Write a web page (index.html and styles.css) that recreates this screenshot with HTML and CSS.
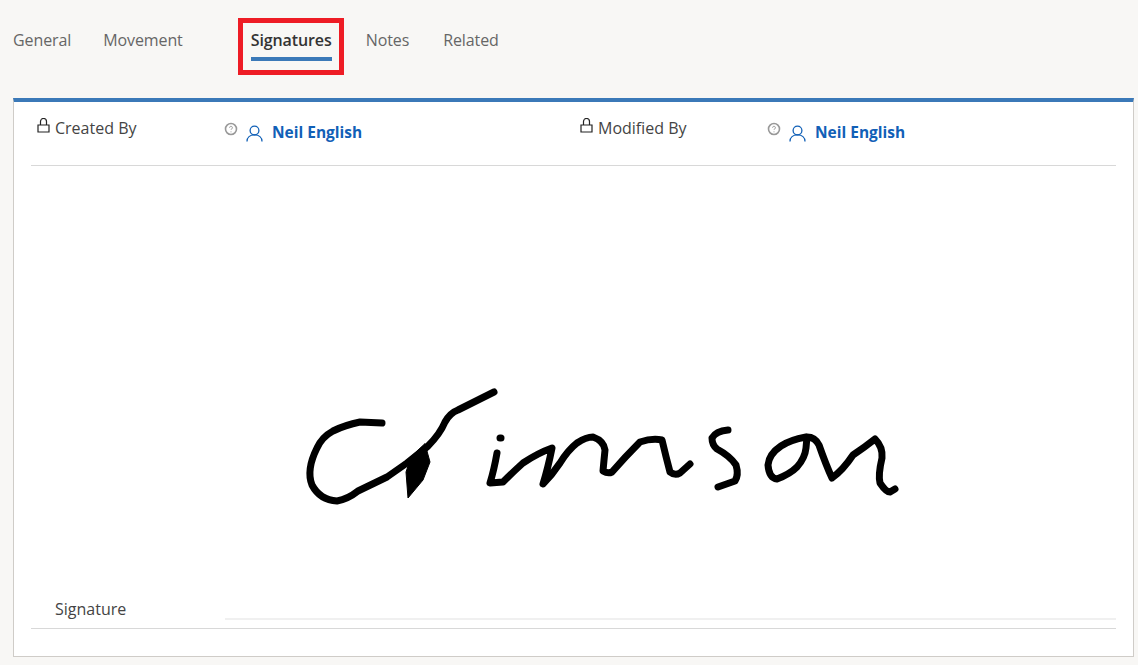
FILE: index.html
```html
<!DOCTYPE html>
<html lang="en">
<head>
    <meta charset="UTF-8">
    <title>Signatures</title>
    <link rel="stylesheet" href="styles.css">
</head>
<body>
    <nav class="tabs">
        <a class="tab tab-general">General</a>
        <a class="tab tab-movement">Movement</a>
        <a class="tab tab-active">Signatures</a>
        <a class="tab tab-notes">Notes</a>
        <a class="tab">Related</a>
    </nav>

    <section class="panel">
        <div class="meta-row">
            <div class="meta-field">
                <div class="meta-label">
                    <svg class="lock" viewBox="0 0 13 15"><path d="M1 7h11v7H1zM3.5 7V3.5a3 3 0 0 1 6 0V7"/></svg>
                    <span>Created By</span>
                </div>
                <div class="meta-value">
                    <svg class="help" viewBox="0 0 14 14"><circle cx="7" cy="7" r="5.5"/><path d="M5.6 5.7a1.4 1.4 0 1 1 2.1 1.2c-.5.3-.7.5-.7 1M7 9.4v.9"/></svg>
                    <svg class="person" viewBox="0 0 17 17"><circle cx="8.5" cy="5.5" r="4.4"/><path d="M1 16.5c0-4 3-6.6 7.5-6.6s7.5 2.6 7.5 6.6"/></svg>
                    <a class="person-link">Neil English</a>
                </div>
            </div>
            <div class="meta-field">
                <div class="meta-label">
                    <svg class="lock" viewBox="0 0 13 15"><path d="M1 7h11v7H1zM3.5 7V3.5a3 3 0 0 1 6 0V7"/></svg>
                    <span>Modified By</span>
                </div>
                <div class="meta-value">
                    <svg class="help" viewBox="0 0 14 14"><circle cx="7" cy="7" r="5.5"/><path d="M5.6 5.7a1.4 1.4 0 1 1 2.1 1.2c-.5.3-.7.5-.7 1M7 9.4v.9"/></svg>
                    <svg class="person" viewBox="0 0 17 17"><circle cx="8.5" cy="5.5" r="4.4"/><path d="M1 16.5c0-4 3-6.6 7.5-6.6s7.5 2.6 7.5 6.6"/></svg>
                    <a class="person-link">Neil English</a>
                </div>
            </div>
        </div>

        <div class="signature-row">
            <div class="signature-label">Signature</div>
            <div class="signature-box">
                <!-- handwritten signature image, viewBox uses page coordinates -->
                <svg class="signature" viewBox="225 380 680 130" role="img" aria-label="Handwritten signature">
                    <path d="M382 423 L360 422 Q345 425 333 431 Q322 437 317 448 Q306 470 312 485 Q320 500 337 501 Q348 499 358 491 L387 477 L407 463 Q420 453 428 446 Q440 434 445 422 Q450 413 458 410 L494 392"/>
                    <path class="fill" d="M425 444 L430 462 L423 480 L408 498 L406 472 L411 457 Z"/>
                    <path d="M497 453 Q494 470 490 483 L503 482 Q513 472 523 463 Q538 453 552 448 Q548 468 543 484 Q552 475 560 463 Q568 450 577 443 Q586 437 593 437 Q604 441 605 450 Q604 460 603 471 Q608 474 612 472 Q625 457 640 442 Q652 438 662 440 Q666 457 670 472 Q675 476 680 473 L690 464"/>
                    <path class="dot" d="M500 438 L501 438"/>
                    <path d="M728 430 Q716 431 712 438 Q712 445 717 449 Q730 456 736 465 Q739 475 735 481 L718 487"/>
                    <path d="M806 437 Q790 440 781 446 Q769 454 768 465 Q769 478 777 479 Q790 474 797 467 Q805 458 806 448 L807 437 Q815 437 819 445 Q826 465 832 478 Q843 470 853 455 Q865 447 875 439 Q883 447 882 458 Q878 475 880 483 Q886 492 890 492 L895 489"/>
                </svg>
            </div>
        </div>
    </section>
</body>
</html>
```

FILE: styles.css
```css
body {
    margin: 0;
    height: 665px;
    overflow: hidden;
    background: #f8f7f5;
    font-family: "Open Sans", "Noto Sans", sans-serif;
    font-size: 16px;
    color: #444;
    padding: 18px 4px 0 13px;
    box-sizing: border-box;
}

/* tab strip */
.tabs {
    display: flex;
    align-items: flex-start;
    height: 80px;
}

.tab {
    color: #666;
    line-height: 20px;
    margin-top: 12px;
    letter-spacing: -0.1px;
}

.tab-general {
    margin-right: 32px;
}

.tab-movement {
    margin-right: 55px;
}

.tab-notes {
    margin-right: 34px;
}

.tab-active {
    box-sizing: border-box;
    width: 106px;
    height: 57px;
    margin: 0 22px 0 0;
    padding: 7px 7px 0 8px;
    border: 5px solid #ee1c25;
    background: #f8f7f5;
    color: #333;
    font-size: 16px;
    font-weight: 600;
    text-align: left;
    white-space: nowrap;
}

.tab-active::after {
    content: "";
    display: block;
    height: 4px;
    margin-top: 7px;
    background: #3b79b8;
}

/* main panel */
.panel {
    box-sizing: border-box;
    height: 559px;
    padding: 0 17px 0 17px;
    background: #fff;
    border: 1px solid #cfccc8;
    border-top: 4px solid #3b79b8;
}

.meta-row {
    display: grid;
    grid-template-columns: 543px 1fr;
    height: 63px;
    border-bottom: 1px solid #d8d8d8;
}

.meta-field {
    display: flex;
    align-items: flex-start;
}

.meta-label {
    width: 193px;
    padding: 16px 0 0 6px;
    box-sizing: border-box;
    display: flex;
    align-items: center;
    gap: 5px;
    line-height: 20px;
}

.meta-value {
    display: flex;
    align-items: center;
    padding-top: 20px;
    line-height: 20px;
}

.lock {
    width: 13px;
    height: 15px;
    margin-top: -5px;
    fill: none;
    stroke: #222;
    stroke-width: 1.2;
}

.help {
    width: 14px;
    height: 14px;
    margin-top: -6px;
    fill: none;
    stroke: #999;
    stroke-width: 1.6;
}

.help path {
    stroke-width: 1;
}

.person {
    width: 17px;
    height: 17px;
    margin: 2px 9px 0 8px;
    fill: none;
    stroke: #1160b7;
    stroke-width: 1.3;
}

.person-link {
    color: #1160b7;
    font-weight: 700;
    font-size: 15.5px;
}

/* signature */
.signature-row {
    display: flex;
    align-items: flex-end;
    height: 462px;
    border-bottom: 1px solid #d8d8d8;
}

.signature-label {
    width: 194px;
    box-sizing: border-box;
    padding: 0 0 9px 24px;
    line-height: 20px;
}

.signature-box {
    flex: 1;
    height: 452px;
    margin-bottom: 8px;
    border-bottom: 2px solid #f0f0f0;
    display: flex;
    align-items: flex-end;
    padding-bottom: 108px;
    box-sizing: border-box;
}

.signature {
    width: 680px;
    height: 130px;
    fill: none;
    stroke: #000;
    stroke-width: 7;
    stroke-linejoin: round;
    stroke-linecap: round;
}

.signature .fill {
    fill: #000;
    stroke-width: 1;
}

.signature .dot {
    stroke-width: 7;
}
```
